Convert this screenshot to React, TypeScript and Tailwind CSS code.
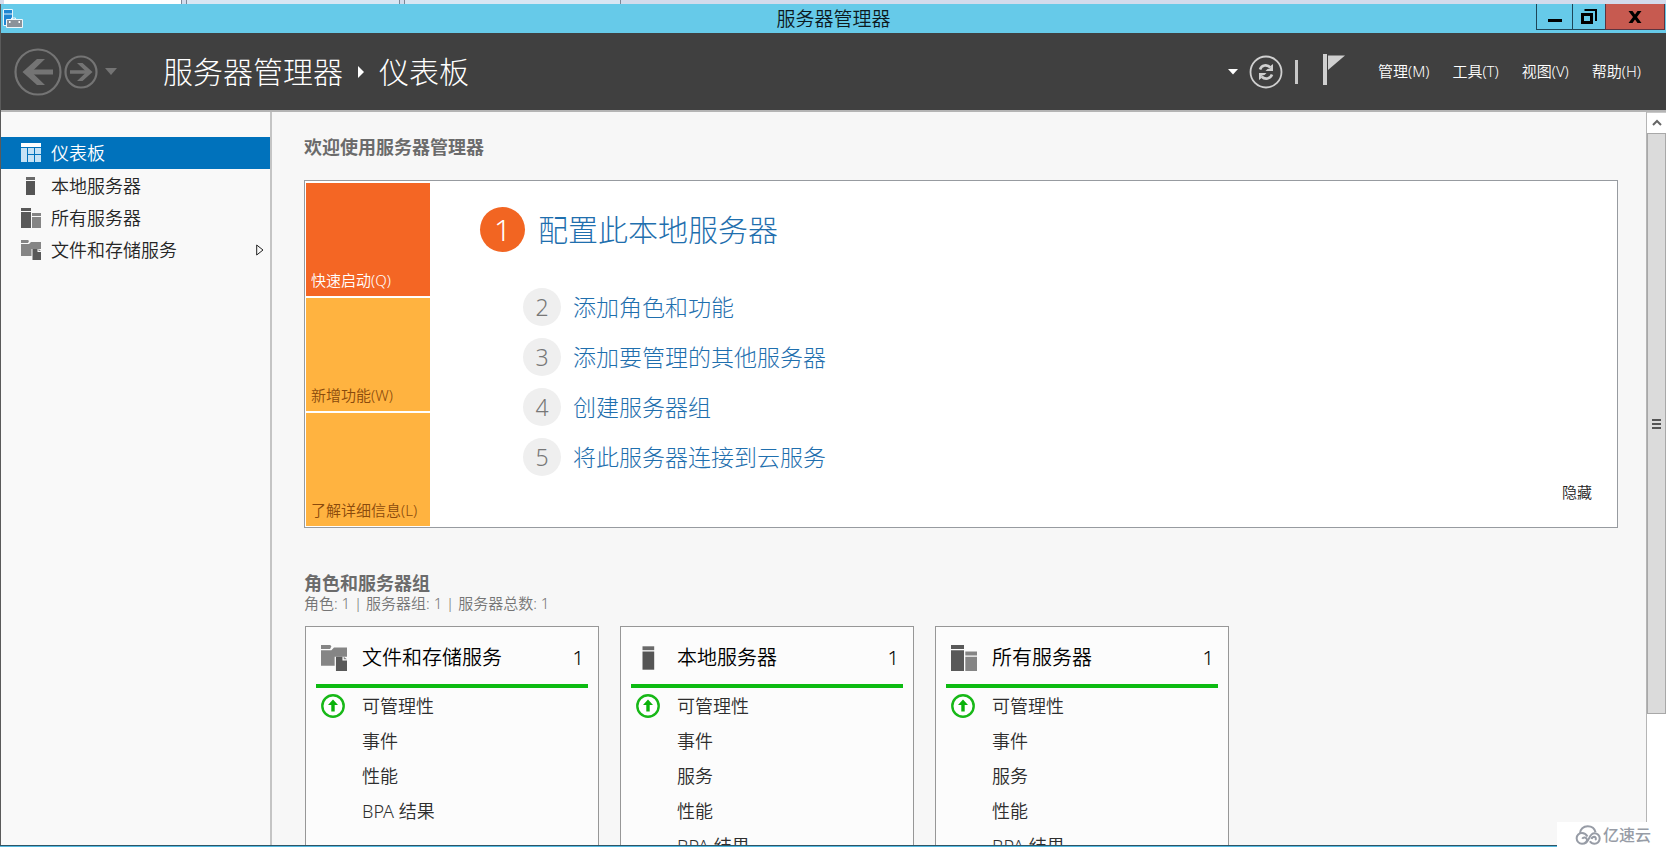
import type { ReactNode } from "react"

const menus = ["管理(M)", "工具(T)", "视图(V)", "帮助(H)"]

const navItems = [
  { label: "仪表板", icon: <DashboardIcon />, active: true },
  { label: "本地服务器", icon: <LocalServerIcon className="size-5" /> },
  { label: "所有服务器", icon: <AllServersIcon className="size-5" /> },
  { label: "文件和存储服务", icon: <FileStorageIcon className="size-5" />, expandable: true },
]

const steps = ["添加角色和功能", "添加要管理的其他服务器", "创建服务器组", "将此服务器连接到云服务"]

const groups = [
  {
    title: "文件和存储服务",
    count: 1,
    icon: <FileStorageIcon className="size-[26px]" />,
    rows: ["可管理性", "事件", "性能", "BPA 结果"],
  },
  {
    title: "本地服务器",
    count: 1,
    icon: <LocalServerIcon className="size-[26px]" />,
    rows: ["可管理性", "事件", "服务", "性能", "BPA 结果"],
  },
  {
    title: "所有服务器",
    count: 1,
    icon: <AllServersIcon className="size-[26px]" />,
    rows: ["可管理性", "事件", "服务", "性能", "BPA 结果"],
  },
]

function DashboardIcon() {
  return (
    <svg viewBox="0 0 20 20" className="size-5">
      <path d="M0 0h20v4H0z" fill="#fff" />
      <path d="M0 5h6v14H0zM7 5h6v6H7zM14 5h6v6h-6zM7 12h6v7H7zM14 12h6v7h-6z" fill="#c5e2f5" />
    </svg>
  )
}

function LocalServerIcon({ className }: { className: string }) {
  return (
    <svg viewBox="0 0 20 20" className={className}>
      <path d="M5 1h9v3H5z" fill="#6a6a6a" />
      <path d="M5 5h9v14H5z" fill="#555" />
    </svg>
  )
}

function AllServersIcon({ className }: { className: string }) {
  return (
    <svg viewBox="0 0 20 20" className={className}>
      <path d="M0 0h10v3H0zM0 4h10v16H0z" fill="#595959" />
      <path d="M11 5h9v3h-9zM11 9h9v11h-9z" fill="#858585" />
    </svg>
  )
}

function FileStorageIcon({ className }: { className: string }) {
  return (
    <svg viewBox="0 0 20 20" className={className}>
      <path d="M0 0h7l1 1-1 2H0zM0 4h8l2-2h10v7h-9.500v7H0z" fill="#858585" />
      <path d="M11.500 9h5v3H20v8h-8.500z" fill="#595959" />
      <path d="M17.500 9l2.500 2h-2.500z" fill="#858585" />
    </svg>
  )
}

function AppIcon() {
  return (
    <svg viewBox="0 0 20 20" className="size-5">
      <path d="M.5.500h9v16h-9z" fill="#1f86d2" stroke="#e8f6fc" />
      <path d="M1 5h8" stroke="#e8f6fc" />
      <path d="M8.500 11V9h4v2" fill="none" stroke="#eef6fa" />
      <path d="M3.500 10.500h16v8h-16z" fill="#8b929a" stroke="#eef6fa" />
      <path d="M6 13h1.500M15.500 13H17" stroke="#fff" strokeWidth="2" />
    </svg>
  )
}

function StatusIcon() {
  return (
    <svg viewBox="0 0 24 24" className="size-6">
      <circle cx="12" cy="12" r="10.700" fill="#fff" stroke="#17b817" strokeWidth="2.400" />
      <path d="M12 5.500l5 5.500h-3.300v6.500h-3.400V11H7z" fill="#0bb30b" />
    </svg>
  )
}

function TitleBar() {
  return (
    <div className="grid h-[29px] grid-cols-[1fr_auto_1fr] bg-[#66cae9]">
      <div className="flex items-center pl-0.5">
        <AppIcon />
      </div>
      <span className="text-[19px] leading-[30px] text-[#0d1a1f]">服务器管理器</span>
      <div className="mr-px flex h-[26px] justify-end text-black">
        <button aria-label="最小化" className="flex w-9 items-center justify-center border-b border-l border-[#1e4658]">
          <svg viewBox="0 0 16 16" className="size-4">
            <path d="M1 10h14v3H1z" />
          </svg>
        </button>
        <button aria-label="还原" className="flex w-[33px] items-center justify-center border-b border-l border-[#1e4658]">
          <svg viewBox="0 0 16 16" className="size-4">
            <path d="M1.500 5.500h9v8h-9z" fill="none" stroke="#000" strokeWidth="3" />
            <path d="M3.500 1H15v11" fill="none" stroke="#000" strokeWidth="2" />
          </svg>
        </button>
        <button aria-label="关闭" className="flex w-[60px] items-center justify-center border-x border-b border-[#5c3440] bg-[#c75a50]">
          <svg viewBox="0 0 16 16" className="size-4">
            <path d="M1.500 2h4L8 5.500 10.500 2h4L10 8l4.500 6h-4L8 10.500 5.500 14h-4L6 8z" />
          </svg>
        </button>
      </div>
    </div>
  )
}

function Header() {
  return (
    <header className="flex h-[77px] shrink-0 items-center bg-[#404040] pr-[25px] pl-[13px] text-white">
      <button aria-label="后退">
        <svg viewBox="0 0 48 48" className="size-12" fill="none" stroke="#747474">
          <circle cx="24" cy="24" r="22.500" strokeWidth="2.200" />
          <path d="M39 24H13" strokeWidth="5" />
          <path d="M31 11h-8L8.500 24 23 37h8L17.500 24z" fill="#747474" stroke="none" />
        </svg>
      </button>
      <button aria-label="前进" className="ml-0.5">
        <svg viewBox="0 0 34 34" className="size-[34px]" fill="none" stroke="#747474">
          <circle cx="17" cy="17" r="15.500" strokeWidth="2.200" />
          <path d="M6 17h20" strokeWidth="3.500" />
          <path d="M13 8h5.500l10 9-10 9H13l9.500-9z" fill="#747474" stroke="none" />
        </svg>
      </button>
      <button aria-label="历史记录" className="ml-1.5">
        <svg viewBox="0 0 14 8" className="h-2 w-[14px]">
          <path d="M1 0h12L7 7z" fill="#747474" />
        </svg>
      </button>

      <h1 className="ml-[45px] flex items-center text-[30px] leading-10 font-light">
        服务器管理器
        <svg viewBox="0 0 8 12" className="mx-[14px] h-3 w-2">
          <path d="M1 0l6 6-6 6z" fill="#fff" />
        </svg>
        仪表板
      </h1>

      <div className="ml-auto flex items-center">
        <button aria-label="刷新选项">
          <svg viewBox="0 0 10 6" className="h-1.5 w-2.5">
            <path d="M0 0h10L5 5.500z" fill="#fff" />
          </svg>
        </button>
        <button aria-label="刷新" className="ml-[11px]">
          <svg viewBox="0 0 34 34" className="size-[34px]" fill="none" stroke="#d0d0d0">
            <circle cx="17" cy="17" r="15.500" strokeWidth="1.800" />
            <path d="M11 14.500c1.500-4.500 7-5.500 10.500-2" strokeWidth="2.600" />
            <path d="M24 9v7h-7.500l2-2 2.500-.500 1-3z" fill="#d0d0d0" stroke="none" />
            <path d="M23 19.500c-1.500 4.500-7 5.500-10.500 2" strokeWidth="2.600" />
            <path d="M10 25v-7h7.500l-2 2-2.500.500-1 3z" fill="#d0d0d0" stroke="none" />
          </svg>
        </button>
        <span className="ml-3 h-6 w-[3px] bg-[#c8c8c8]" />
        <button aria-label="通知" className="-mt-1 ml-6">
          <svg viewBox="0 0 24 31" className="h-[31px] w-6">
            <path d="M1 0h4v31H1z" fill="#d0d0d0" />
            <path d="M6 1.500h17L6 16z" fill="#d0d0d0" />
          </svg>
        </button>
        <nav className="-mt-0.5 ml-8 flex gap-[23px] text-[15px] leading-5">
          {menus.map((menu) => (
            <button key={menu}>{menu}</button>
          ))}
        </nav>
      </div>
    </header>
  )
}

function Sidebar() {
  return (
    <nav className="flex w-[271px] shrink-0 flex-col border-r-2 border-[#c4c4c4] bg-[#f9f9f9] pt-[25px]">
      {navItems.map((item) => (
        <a
          key={item.label}
          href="#"
          className={
            item.active
              ? "mb-px flex h-8 items-center bg-[#0072bc] px-5 text-[18px] leading-6 text-white"
              : "flex h-8 items-center pr-1.5 pl-5 text-[18px] leading-6 text-[#262626]"
          }
        >
          {item.icon}
          <span className="ml-[10px]">{item.label}</span>
          {item.expandable && (
            <svg viewBox="0 0 8 12" className="ml-auto h-3 w-2" fill="none" stroke="#222">
              <path d="M.7 1l6.300 5-6.300 5z" />
            </svg>
          )}
        </a>
      ))}
    </nav>
  )
}

function Tile({ className, children }: { className: string; children: ReactNode }) {
  return (
    <button className={`flex h-[113px] w-[124px] items-end px-[5px] pb-1.5 text-[15px] leading-5 ${className}`}>
      {children}
    </button>
  )
}

function Welcome() {
  return (
    <section className="flex border border-[#979ba0] bg-white px-px pt-0.5 pb-px">
      <div className="flex flex-col gap-0.5">
        <Tile className="bg-[#f46624] text-white">快速启动(Q)</Tile>
        <Tile className="bg-[#ffb340] text-[#8a4a0c]">新增功能(W)</Tile>
        <Tile className="bg-[#ffb340] text-[#8a4a0c]">了解详细信息(L)</Tile>
      </div>
      <div className="pt-6 pl-[50px] text-[#1f6fae]">
        <a href="#" className="flex items-center gap-[13px] text-[30px] leading-10 font-light">
          <span className="flex size-[45px] items-center justify-center rounded-full bg-[#f26522] text-white">1</span>
          配置此本地服务器
        </a>
        <ol className="mt-9 ml-[43px] flex flex-col gap-3">
          {steps.map((step, i) => (
            <li key={step}>
              <a href="#" className="flex items-center gap-3 text-[23px] leading-8 font-light">
                <span className="flex size-[38px] items-center justify-center rounded-full bg-[#efefef] text-[#777]">
                  {i + 2}
                </span>
                {step}
              </a>
            </li>
          ))}
        </ol>
      </div>
      <button className="mr-6 mb-6 ml-auto self-end text-[15px] leading-5 text-[#222]">隐藏</button>
    </section>
  )
}

function GroupCard({ group }: { group: (typeof groups)[number] }) {
  return (
    <article className="w-[294px] border border-[#979797] bg-[#fcfcfc] px-[10px]">
      <h3 className="flex h-[61px] items-center border-b-4 border-[#0dbb12] pt-1 pr-1 pl-[5px] text-[20px] leading-7 text-black">
        {group.icon}
        <span className="ml-[15px]">{group.title}</span>
        <span className="ml-auto">{group.count}</span>
      </h3>
      <ul className="pb-5 text-[18px] leading-6 text-[#2e2e2e]">
        {group.rows.map((row, i) => (
          <li key={row} className="grid h-[35px] grid-cols-[41px_1fr] items-center pl-[5px]">
            <span>{i === 0 && <StatusIcon />}</span>
            <a href="#">{row}</a>
          </li>
        ))}
      </ul>
    </article>
  )
}

function ScrollBar() {
  return (
    <div className="flex w-5 shrink-0 flex-col border-l border-[#b5b5b5] bg-white">
      <button aria-label="向上滚动" className="flex h-[21px] items-center justify-center border-t border-[#c8c8c8]">
        <svg viewBox="0 0 10 8" className="h-2 w-2.5" fill="none" stroke="#666" strokeWidth="2">
          <path d="M1 6l4-4 4 4" />
        </svg>
      </button>
      <div className="flex h-[79.3%] items-center justify-center border border-[#a8a8a8] bg-[#dbdbdb]">
        <svg viewBox="0 0 9 10" className="h-2.5 w-[9px]">
          <path d="M0 0h9v2H0zM0 4h9v2H0zM0 8h9v2H0z" fill="#555" />
        </svg>
      </div>
    </div>
  )
}

function Watermark() {
  return (
    <div className="absolute right-0 bottom-0 flex h-[25px] w-[109px] items-center gap-0.5 bg-white pl-[18px] text-[16px] leading-5 font-medium text-[#979ca6]">
      <svg viewBox="0 0 26 20" className="h-5 w-[26px]" fill="none" stroke="#979ca6" strokeWidth="2">
        <path d="M5 8.500C5 4 8.500 1.300 12.700 1.300c4 0 7 2.400 7.800 6" />
        <path d="M12.500 11.500C11 9 9.300 8 7 8a5.300 5.300 0 0 0 0 10.700c3 0 5-1.700 5-4a2.600 2.600 0 0 0-4.800-1" />
        <path d="M9.500 18c2.500-.500 3.500-2.500 4.500-4.700 1.300-2.800 2.800-5 5.500-5a5.200 5.200 0 0 1 0 10.400c-2.300 0-3.700-1-4.600-2.500" />
        <path d="M16.500 14c.5-1.500 1.500-2.200 2.700-2.200a1.800 1.800 0 0 1 1 3.200" />
      </svg>
      亿速云
    </div>
  )
}

export default function App() {
  return (
    <div className="relative flex h-screen flex-col overflow-hidden bg-[#f7f7f7] font-['Noto_Sans','Noto_Sans_CJK_SC',sans-serif] font-[350]">
      {/* sliver of the tab strip behind the window */}
      <div className="flex h-1 shrink-0 bg-[#d3dbec]">
        <div className="ml-1 w-[178px] border-r border-[#7d8797] bg-white" />
        <div className="ml-1 w-[214px] border-x border-[#7d8797] bg-[#d9e6f3]" />
        <div className="ml-1 w-[217px] border-x border-[#7d8797] bg-[#d9e6f3]" />
      </div>

      <div className="flex min-h-0 flex-1 flex-col border-l border-[#5a5a5a]">
        <TitleBar />
        <Header />
        <div className="flex min-h-0 flex-1 border-t-2 border-[#b4b4b4]">
          <Sidebar />
          <main className="min-w-0 flex-1 overflow-hidden pt-[23px] pr-7 pl-8">
            <h2 className="text-[18px] leading-6 font-bold text-[#6b6b6b]">欢迎使用服务器管理器</h2>
            <div className="mt-[21px]">
              <Welcome />
            </div>
            <h2 className="mt-[45px] text-[18px] leading-5 font-bold text-[#6b6b6b]">角色和服务器组</h2>
            <p className="text-[15px] leading-5 text-[#757575]">角色: 1 | 服务器组: 1 | 服务器总数: 1</p>
            <div className="mt-[13px] ml-px flex gap-[21px]">
              {groups.map((group) => (
                <GroupCard key={group.title} group={group} />
              ))}
            </div>
          </main>
          <ScrollBar />
        </div>
      </div>

      <div className="h-0.5 shrink-0 border-t border-[#2f5566] bg-[#55b9e0]" />
      <Watermark />
    </div>
  )
}
